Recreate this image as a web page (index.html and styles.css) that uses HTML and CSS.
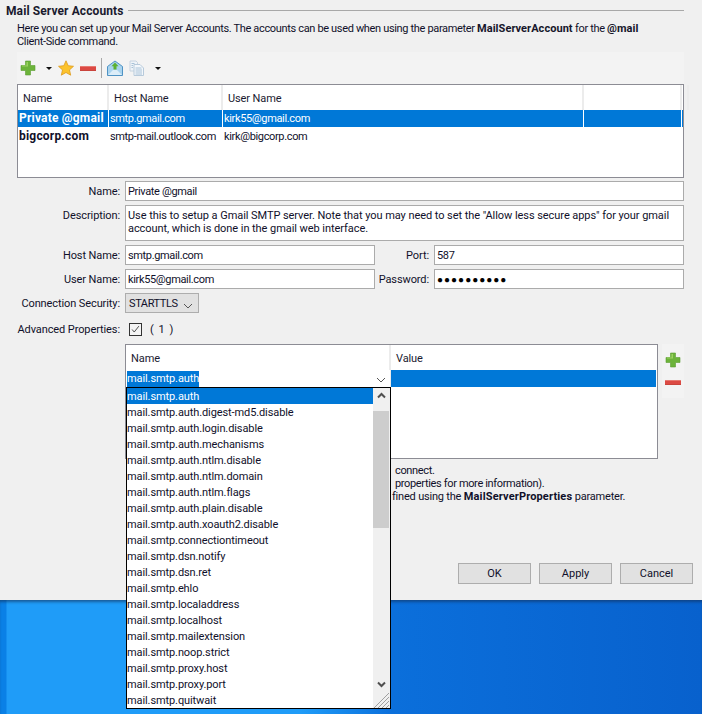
FILE: index.html
```html
<!DOCTYPE html>
<html lang="en">
<head>
<meta charset="utf-8">
<title>Mail Server Accounts</title>
<link rel="stylesheet" href="styles.css">
</head>
<body>
<main class="dialog">
  <div class="legend"><span class="legend-title">Mail Server Accounts</span><span class="legend-rule"></span></div>
  <div class="panel">
    <p class="intro">Here you can set up your Mail Server Accounts. The accounts can be used when using the parameter <b>MailServerAccount</b> for the <b>@mail</b><br>Client-Side command.</p>
    <div class="toolbar">
      <svg class="ico plus" viewBox="0 0 16 16"><path d="M5.500 1h5v4.500H15v5h-4.500V15h-5v-4.500H1v-5h4.500z" fill="#6cb33a" stroke="#5a9e32" stroke-width=".6"/><path d="M6.500 2h1.500v4.500H2v-1h4.500z" fill="#9ad25f"/></svg>
      <span class="caret caret-a"></span>
      <svg class="ico star" viewBox="0 0 16 16"><path d="M8 .8l2.200 4.900 5.300.6-4 3.600 1.200 5.300L8 12.500l-4.700 2.700 1.200-5.300-4-3.600 5.300-.6z" fill="#fcc32c" stroke="#dd9a1d" stroke-width=".8"/></svg>
      <span class="minus"></span>
      <span class="tool-sep"></span>
      <svg class="ico env" viewBox="0 0 16 16"><path d="M.5 6.500L8 1l7.500 5.500v9H.5z" fill="#a9d3ee" stroke="#4f93c4"/><path d="M1 15l5-5h4l5 5z" fill="#dcedf8"/><path d="M8 2.500l3.500 3.700H9.500v3.300h-3V6.200H4.500z" fill="#5cb131"/></svg>
      <svg class="ico docs" viewBox="0 0 16 16"><path d="M1 1h6l1.500 1.500V11H1z" fill="#eef3f8" stroke="#c6d3e0"/><path d="M5 4.500h6l3.500 3.500v7.500H5z" fill="#f3f7fb" stroke="#b7cadb"/><path d="M6.500 8h6M6.500 10h6.500M6.500 12h6.500M6.500 14h6.500M2.500 3.500h3M2.500 5.500h1.500M2.500 7.500h1.500" stroke="#a8c2d8"/></svg>
      <span class="caret caret-b"></span>
    </div>
    <div class="table accounts">
      <div class="thead acc-cols">
        <span class="th">Name</span><span class="th">Host Name</span><span class="th">User Name</span><span class="th"></span><span class="th"></span>
      </div>
      <div class="row acc-cols selected">
        <span class="td strong">Private @gmail</span><span class="td">smtp.gmail.com</span><span class="td">kirk55@gmail.com</span><span class="td"></span><span class="td"></span>
      </div>
      <div class="row acc-cols">
        <span class="td strong">bigcorp.com</span><span class="td">smtp-mail.outlook.com</span><span class="td">kirk@bigcorp.com</span><span class="td"></span><span class="td"></span>
      </div>
    </div>
    <div class="form">
      <div class="f-row">
        <label class="lbl">Name:</label>
        <div class="field grow">Private @gmail</div>
      </div>
      <div class="f-row desc-row">
        <label class="lbl">Description:</label>
        <div class="field grow desc">Use this to setup a Gmail SMTP server. Note that you may need to set the "Allow less secure apps" for your gmail<br>account, which is done in the gmail web interface.</div>
      </div>
      <div class="f-row">
        <label class="lbl">Host Name:</label>
        <div class="field half">smtp.gmail.com</div>
        <label class="lbl2">Port:</label>
        <div class="field grow">587</div>
      </div>
      <div class="f-row">
        <label class="lbl">User Name:</label>
        <div class="field half">kirk55@gmail.com</div>
        <label class="lbl2">Password:</label>
        <div class="field grow dots">●●●●●●●●●●</div>
      </div>
      <div class="f-row">
        <label class="lbl">Connection Security:</label>
        <div class="select">STARTTLS<svg class="chev" viewBox="0 0 10 6"><path d="M1 1l4 4 4-4" fill="none" stroke="#555"/></svg></div>
      </div>
      <div class="f-row adv-row">
        <label class="lbl">Advanced Properties:</label>
        <span class="check"><svg viewBox="0 0 13 13"><path d="M2.500 6.500l2.500 3 5.500-7" fill="none" stroke="#444" stroke-width="1.100"/></svg></span>
        <span class="count">( 1 )</span>
      </div>
    </div>
    <div class="props-wrap">
      <div class="table props">
        <div class="thead prop-cols">
          <span class="th">Name</span><span class="th">Value</span>
        </div>
        <div class="row prop-cols editing">
          <span class="editor"><span class="editor-text">mail.smtp.auth</span><svg class="chev chev-ed" viewBox="0 0 10 6"><path d="M1 1l4 4 4-4" fill="none" stroke="#555"/></svg></span>
          <span class="value-sel"></span>
        </div>
      </div>
      <div class="side-tools">
        <svg class="ico plus" viewBox="0 0 16 16"><path d="M5.500 1h5v4.500H15v5h-4.500V15h-5v-4.500H1v-5h4.500z" fill="#6cb33a" stroke="#5a9e32" stroke-width=".6"/><path d="M6.500 2h1.500v4.500H2v-1h4.500z" fill="#9ad25f"/></svg>
        <span class="minus"></span>
      </div>
    </div>
    <div class="notes">
      <p>connect.</p>
      <p>properties for more information).</p>
      <p class="note-cut">fined using the <b>MailServerProperties</b> parameter.</p>
    </div>
    <div class="buttons">
      <button class="btn">OK</button>
      <button class="btn">Apply</button>
      <button class="btn">Cancel</button>
    </div>
  </div>
</main>
<div class="desktop"></div>
<div class="popup">
  <ul class="list">
    <li class="on">mail.smtp.auth</li>
    <li>mail.smtp.auth.digest-md5.disable</li>
    <li>mail.smtp.auth.login.disable</li>
    <li>mail.smtp.auth.mechanisms</li>
    <li>mail.smtp.auth.ntlm.disable</li>
    <li>mail.smtp.auth.ntlm.domain</li>
    <li>mail.smtp.auth.ntlm.flags</li>
    <li>mail.smtp.auth.plain.disable</li>
    <li>mail.smtp.auth.xoauth2.disable</li>
    <li>mail.smtp.connectiontimeout</li>
    <li>mail.smtp.dsn.notify</li>
    <li>mail.smtp.dsn.ret</li>
    <li>mail.smtp.ehlo</li>
    <li>mail.smtp.localaddress</li>
    <li>mail.smtp.localhost</li>
    <li>mail.smtp.mailextension</li>
    <li>mail.smtp.noop.strict</li>
    <li>mail.smtp.proxy.host</li>
    <li>mail.smtp.proxy.port</li>
    <li>mail.smtp.quitwait</li>
  </ul>
  <div class="scroll">
    <svg class="sb-arrow" viewBox="0 0 17 16"><path d="M5 9.500l3.500-3.500 3.500 3.500" fill="none" stroke="#505050" stroke-width="2"/></svg>
    <div class="track"><div class="thumb"></div></div>
    <svg class="sb-arrow" viewBox="0 0 17 16"><path d="M5 6.500l3.500 3.500 3.500-3.500" fill="none" stroke="#505050" stroke-width="2"/></svg>
    <svg class="grip" viewBox="0 0 17 16"><path d="M16 1L1 16M16 5L5 16M16 9L9 16M16 13l-3 3" stroke="#a0a0a0"/></svg>
  </div>
</div>
</body>
</html>
```
FILE: styles.css
```css
* { box-sizing: border-box; }
html, body { margin: 0; padding: 0; }
body {
  width: 702px;
  height: 714px;
  overflow: hidden;
  position: relative;
  font-family: Roboto, "Liberation Sans", sans-serif;
  font-size: 11px;
  letter-spacing: -.1px;
  line-height: 13px;
  color: #10102a;
  background: #1a8fee;
}
p { margin: 0; }
ul { margin: 0; padding: 0; list-style: none; }
.dialog {
  height: 600px;
  background: #f0f0f0;
  padding-top: 4px;
}
.legend { display: flex; align-items: center; height: 14px; padding: 0 18px 0 6px; gap: 4px; }
.legend-title { font-weight: 700; font-size: 12px; letter-spacing: .1px; color: #1a1a2e; }
.legend-rule { flex: 1; height: 1px; background: #a8a8a8; margin-top: -1px; }
.panel { padding: 4px 18px 0 17px; }
.intro { height: 30px; white-space: nowrap; letter-spacing: -.34px; }
.intro b { color: #16162a; letter-spacing: .05px; }
.toolbar {
  height: 32px;
  background: #f3f3f3;
  display: flex;
  align-items: center;
  padding-left: 3px;
}
.ico { width: 16px; height: 16px; display: block; flex: none; }
.caret { width: 0; height: 0; border-left: 3px solid transparent; border-right: 3px solid transparent; border-top: 3px solid #111; flex: none; }
.caret-a { margin-left: 10px; }
.toolbar .star { margin-left: 6px; }
.minus { display: block; width: 16px; height: 5px; background: #dc4a44; border-top: 1px solid #e67a72; border-bottom: 1px solid #c9443c; flex: none; }
.toolbar .minus { margin-left: 6px; }
.tool-sep { width: 1px; height: 20px; background: #a8a8a8; margin-left: 5px; flex: none; }
.toolbar .env { margin-left: 5px; }
.toolbar .docs { margin-left: 6px; }
.caret-b { margin-left: 10px; }
.table { background: #fff; border: 1px solid #8c8c94; }
.accounts { height: 94px; }
.acc-cols { display: grid; grid-template-columns: 91px 114px 361px 98px 1fr; }
.thead { height: 25px; }
.th { border-right: 2px solid #ececec; padding: 7px 0 0 5px; color: #1a1a30; }
.row { height: 17px; }
.accounts .row + .row { height: 18px; padding-top: 1px; }
.td { padding: 2px 0 0 1px; white-space: nowrap; overflow: hidden; border-right: 1px solid transparent; letter-spacing: -.35px; }
.strong { font-weight: 700; font-size: 12px; letter-spacing: .2px; }
.selected { background: #0078d7; color: #fff; }
.selected .td { border-right-color: #fff; }
.selected .td:last-child { border-right: 0; }
.form { margin-top: 3px; }
.f-row { display: flex; align-items: center; height: 20px; margin-bottom: 4px; }
.desc-row { height: 36px; margin-bottom: 4px; align-items: flex-start; }
.lbl { width: 103px; text-align: right; margin-right: 5px; flex: none; white-space: nowrap; }
.desc-row .lbl { padding-top: 4px; }
.lbl2 { width: 54px; text-align: right; margin-right: 5px; flex: none; white-space: nowrap; }
.field { height: 100%; background: #fff; border: 1px solid #ababab; padding: 3px 0 0 2px; white-space: nowrap; overflow: hidden; letter-spacing: -.35px; }
.grow { flex: 1; }
.half { width: 250px; flex: none; }
.desc { letter-spacing: -.06px; }
.dots { font-size: 10px; padding-left: 2px; letter-spacing: 1px; color: #000; }
.select {
  width: 74px; height: 20px; background: #e1e1e1; border: 1px solid #adadad;
  padding: 3px 0 0 3px; display: flex; justify-content: space-between; letter-spacing: -.4px;
}
.chev { width: 10px; height: 6px; display: block; }
.select .chev { margin: 6px 5px 0 0; }
.adv-row { height: 14px; margin: 9px 0 8px; }
.check { width: 13px; height: 13px; border: 1px solid #333; background: #f4f4f4; margin-left: 4px; display: block; flex: none; }
.check svg { width: 11px; height: 11px; display: block; }
.count { margin-left: 8px; letter-spacing: 1px; }
.props-wrap { display: flex; margin-left: 108px; gap: 4px; }
.props { width: 533px; height: 115px; }
.prop-cols { display: grid; grid-template-columns: 265px 1fr; }
.prop-cols .th:last-child { border-right: 0; }
.editing { height: 17px; }
.editor { background: #fff; display: flex; justify-content: space-between; align-items: center; border-right: 1px solid #ececec; }
.editor-text { background: #0078d7; color: #fff; height: 16px; padding-top: 1px; margin-left: 1px; }
.chev-ed { margin-right: 4px; margin-top: 3px; }
.value-sel { background: #0078d7; margin-right: 1px; }
.side-tools { width: 22px; height: 54px; background: #f3f3f3; display: flex; flex-direction: column; align-items: center; padding-top: 8px; gap: 12px; }
.notes { margin: 5px 0 0 374px; padding-left: 4px; white-space: nowrap; letter-spacing: -.35px; }
.notes p { height: 13px; }
.notes .note-cut { margin-left: -3px; letter-spacing: -.2px; }
.notes b { letter-spacing: .15px; }
.buttons { display: flex; margin: 60px -9px 0 0; justify-content: flex-end; gap: 8px; }
.btn {
  width: 73px; height: 21px; padding: 0; background: #e1e1e1; border: 1px solid #adadad;
  font: inherit; color: #10102a;
}
.desktop {
  height: 114px;
  background: linear-gradient(90deg, #0a80e6 0, #0a80e6 6px, #1f9cf8 7px, #1f9cf8 300px, #0b6fdb 392px, #0861cd 702px);
  box-shadow: inset 0 3px 3px -1px rgba(20, 50, 90, .6);
}
.popup {
  position: absolute;
  left: 126px;
  top: 387px;
  width: 265px;
  height: 322px;
  background: #fff;
  border: 1px solid #000;
  display: flex;
}
.list { flex: 1; min-width: 0; }
.list li { height: 16px; line-height: 18px; white-space: nowrap; }
.list .on { background: #0078d7; color: #fff; }
.scroll { width: 17px; background: #f0f0f0; position: relative; display: flex; flex-direction: column; }
.sb-arrow { width: 17px; height: 16px; display: block; flex: none; }
.track { height: 272px; padding-top: 7px; flex: none; }
.thumb { height: 117px; background: #cdcdcd; margin-right: 1px; }
.grip { width: 17px; height: 16px; display: block; position: absolute; right: 0; bottom: 0; }
```
